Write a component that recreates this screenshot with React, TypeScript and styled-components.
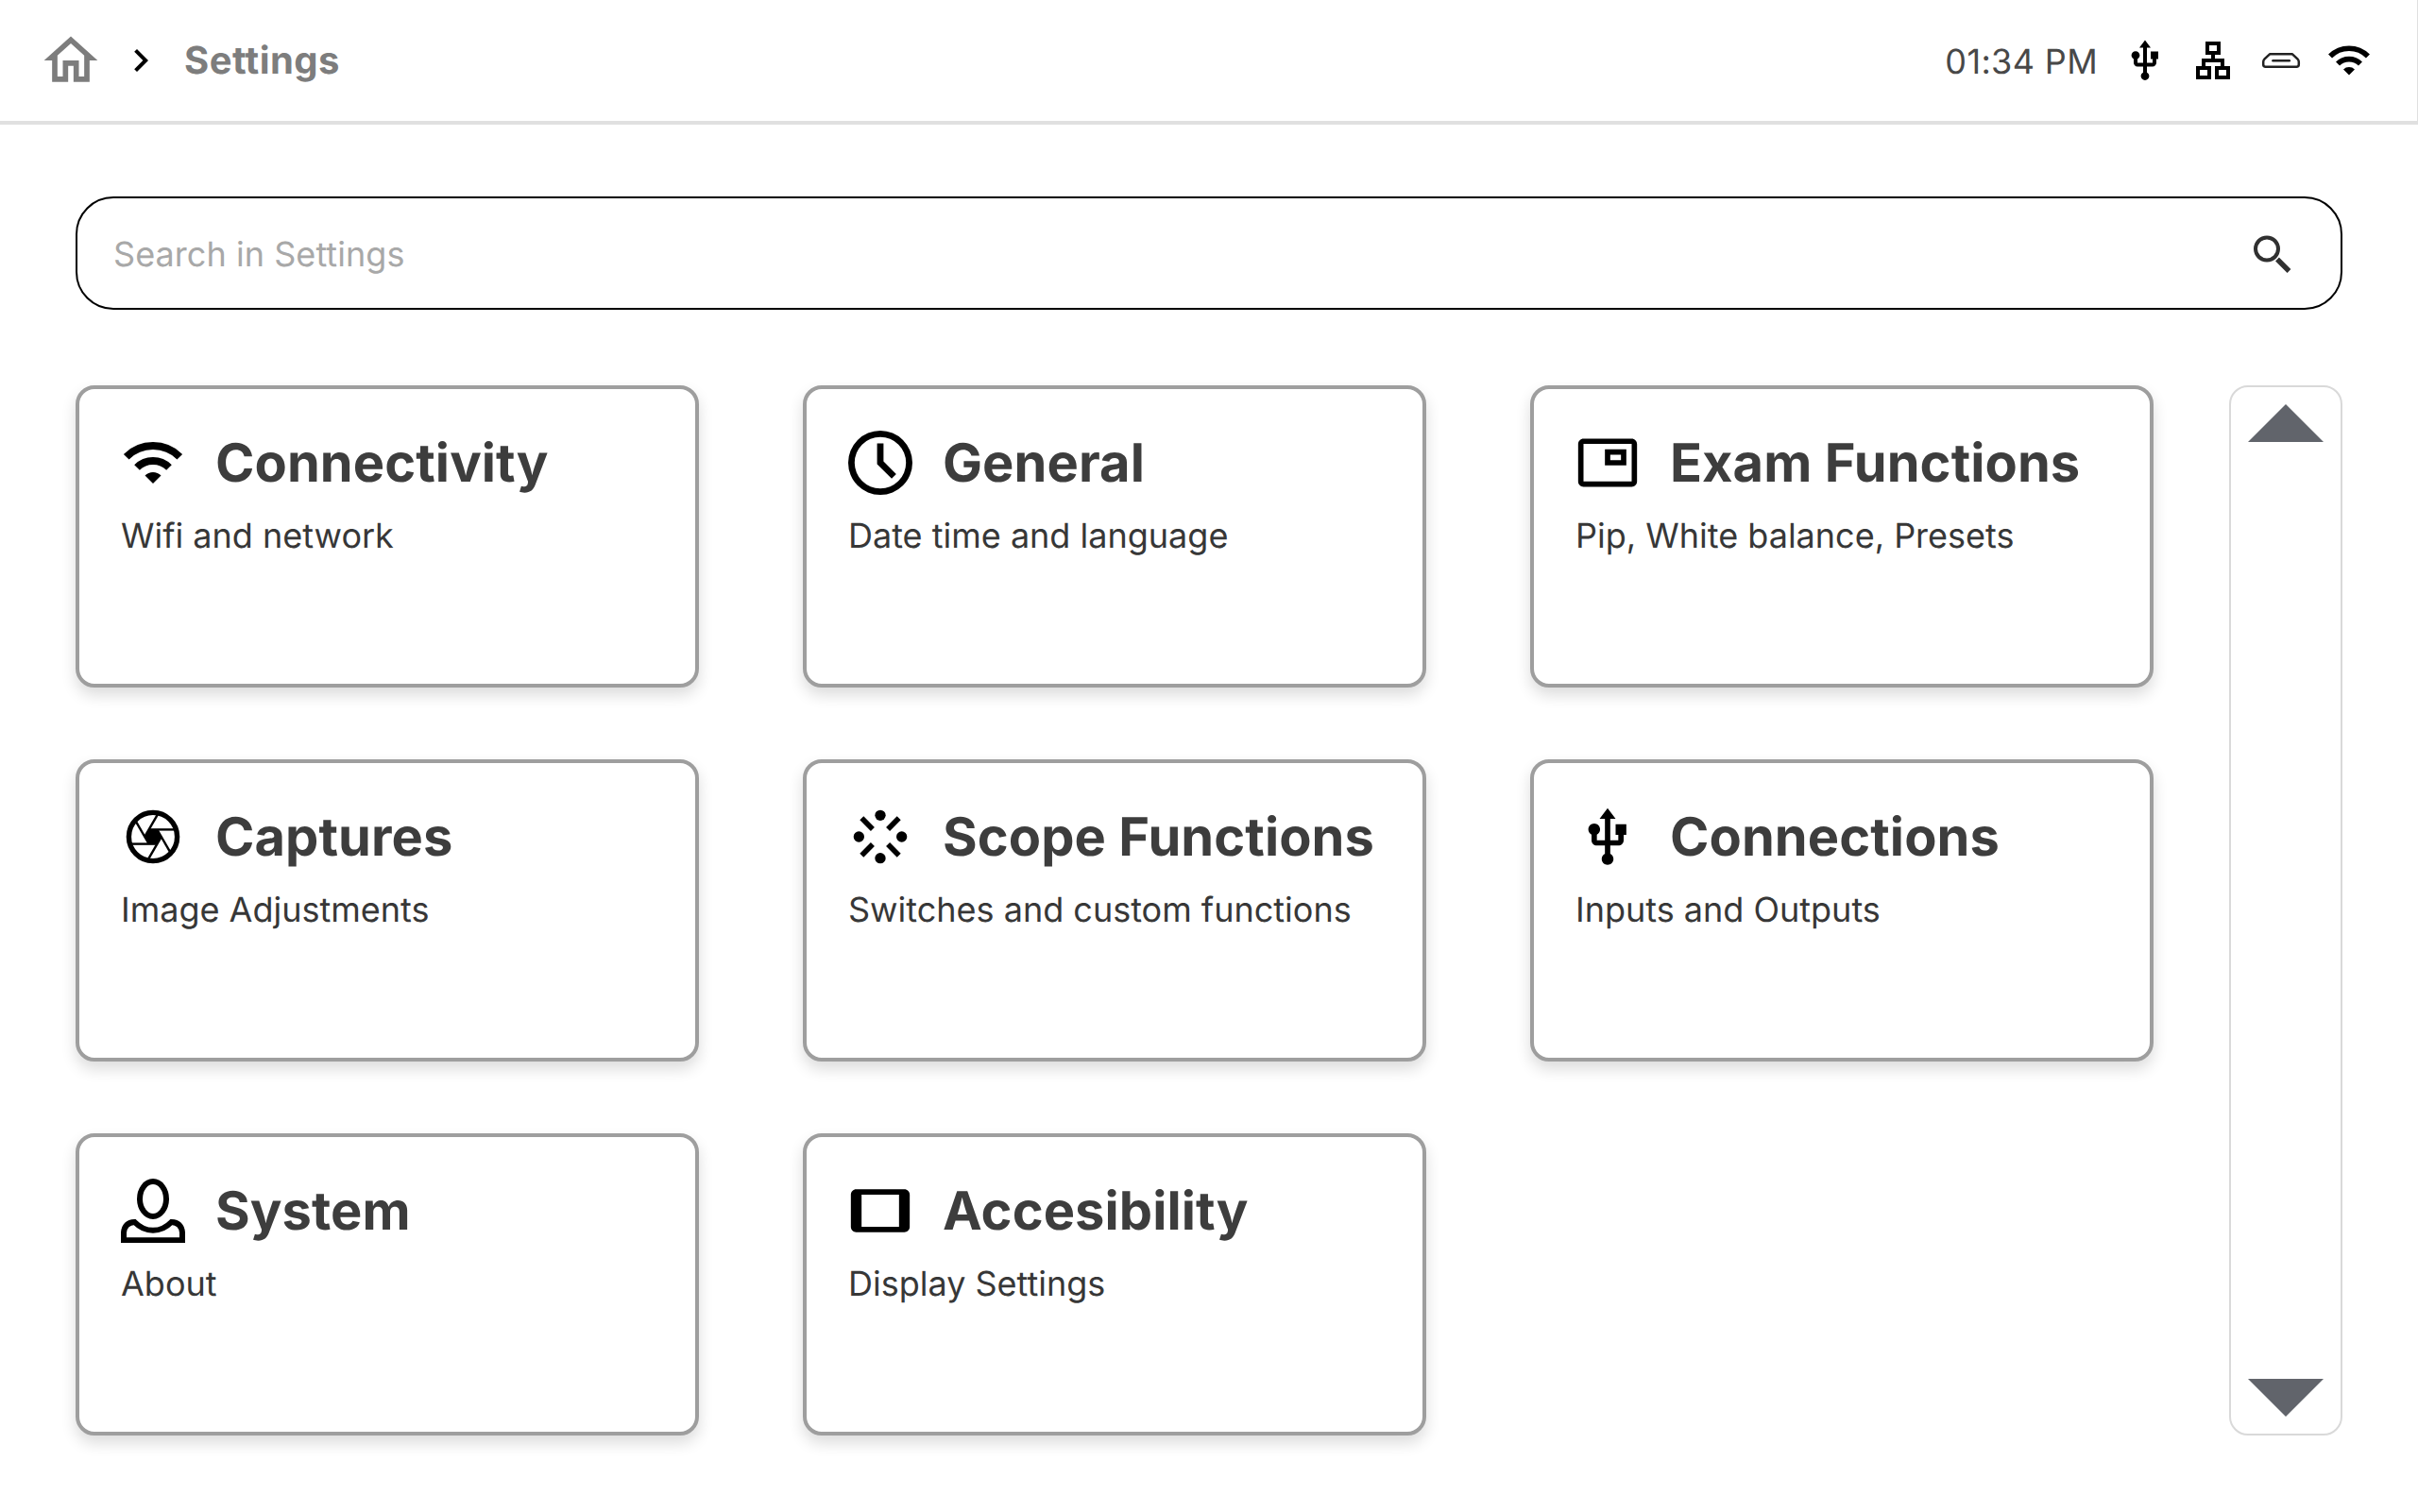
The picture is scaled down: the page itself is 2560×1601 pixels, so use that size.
import React from 'react';
import styled, { createGlobalStyle } from 'styled-components';

const GlobalStyle = createGlobalStyle`
  * { box-sizing: border-box; }
  body { margin: 0; background: #fff; }
`;

const Page = styled.div`
  width: 2560px;
  height: 1601px;
  overflow: hidden;
  display: flex;
  flex-direction: column;
  background: #fff;
  font-family: Inter, 'Liberation Sans', sans-serif;
  text-rendering: geometricPrecision;
`;

const Header = styled.header`
  height: 132px;
  flex: none;
  display: flex;
  align-items: center;
  justify-content: space-between;
  padding: 0 48px 0 41px;
  border-bottom: 4px solid #e0e0e0;
  border-right: 1px solid #e0e0e0;
`;

const Breadcrumb = styled.nav`
  display: flex;
  align-items: center;
`;

const HomeLink = styled.a`
  display: flex;
  margin-right: 16px;
  color: #7d7d7d;
`;

const Crumb = styled.span`
  margin-left: 22px;
  font-size: 40px;
  line-height: 48px;
  font-weight: 700;
  letter-spacing: 0.45px;
  color: #7d7d7d;
`;

const StatusBar = styled.div`
  display: flex;
  align-items: center;
  gap: 24px;
`;

const Clock = styled.span`
  padding: 2px 2px 0 0;
  font-size: 36px;
  line-height: 48px;
  letter-spacing: 0.35px;
  color: #484848;
`;

const Main = styled.main`
  flex: 1;
  display: flex;
  flex-direction: column;
  gap: 80px;
  padding: 76px 80px 80px;
`;

const SearchBox = styled.label`
  height: 120px;
  display: flex;
  align-items: center;
  justify-content: space-between;
  padding: 2px 50px 0 38px;
  border: 2px solid #000;
  border-radius: 40px;
`;

const SearchInput = styled.input`
  flex: 1;
  padding: 0;
  border: 0;
  outline: 0;
  background: transparent;
  font: 400 36px/48px Inter, 'Liberation Sans', sans-serif;
  letter-spacing: 0.05px;
  text-rendering: geometricPrecision;
  color: #333;
  &::placeholder { color: #a8a8a8; opacity: 1; }
`;

const Content = styled.div`
  display: flex;
  gap: 80px;
`;

const Grid = styled.section`
  display: grid;
  grid-template-columns: repeat(3, 660px);
  grid-auto-rows: 320px;
  gap: 76px 110px;
`;

const Card = styled.article`
  display: flex;
  flex-direction: column;
  gap: 20px;
  padding: 44px;
  border: 4px solid #9e9e9e;
  border-radius: 20px;
  background: #fff;
  box-shadow: 0 8px 16px rgba(0, 0, 0, 0.14);
`;

const CardHead = styled.div`
  height: 68px;
  display: flex;
  align-items: center;
  gap: 32px;
`;

const CardTitle = styled.h2`
  margin: 0;
  font-size: 56px;
  line-height: 68px;
  font-weight: 700;
  letter-spacing: 0.08px;
  color: #3d3d3d;
  white-space: nowrap;
`;

const CardText = styled.p`
  margin: 0;
  font-size: 36px;
  line-height: 46px;
  color: #373737;
  white-space: nowrap;
`;

const ScrollRail = styled.aside`
  width: 120px;
  height: 1112px;
  display: flex;
  flex-direction: column;
  align-items: center;
  justify-content: space-between;
  padding: 18px 0;
  border: 2px solid #d9d9d9;
  border-radius: 20px;
`;

const Svg = styled.svg<{ $size: number }>`
  flex: none;
  display: block;
  width: ${(p) => p.$size}px;
  height: ${(p) => p.$size}px;
  fill: currentColor;
`;

const Arrow = styled.svg`
  display: block;
  width: 80px;
  height: 40px;
  fill: #61646b;
`;

type IconProps = { size?: number };

const HomeIcon = ({ size = 68 }: IconProps) => (
  <Svg $size={size} viewBox="0 0 24 24">
    <path d="M12 5.69l5 4.5V18h-2v-6H9v6H7v-7.81l5-4.5M12 3L2 12h3v8h6v-6h2v6h6v-8h3L12 3z" />
  </Svg>
);

const ChevronIcon = ({ size = 48 }: IconProps) => (
  <Svg $size={size} viewBox="0 0 24 24">
    <path d="M10 6L8.59 7.41 13.17 12l-4.58 4.59L10 18l6-6z" />
  </Svg>
);

const WifiIcon = ({ size = 68 }: IconProps) => (
  <Svg $size={size} viewBox="0 0 68 68">
    <g transform="translate(34 56)">
      <path d="M-28.28 -28.28A40 40 0 0 1 28.28 -28.28" fill="none" stroke="currentColor" strokeWidth="8" />
      <path d="M-16.97 -16.97A24 24 0 0 1 16.97 -16.97" fill="none" stroke="currentColor" strokeWidth="8" />
      <path d="M0 0L-8.49 -8.49A12 12 0 0 1 8.49 -8.49Z" />
    </g>
  </Svg>
);

const UsbIcon = ({ size = 68 }: IconProps) => (
  <Svg $size={size} viewBox="0 -0.3 24 24">
    <path d="M15 7v4h1v2h-3V5h2l-3-4-3 4h2v8H8v-2.07c.7-.37 1.2-1.08 1.2-1.93 0-1.21-.99-2.2-2.2-2.2-1.21 0-2.2.99-2.2 2.2 0 .85.5 1.56 1.2 1.93V13c0 1.11.89 2 2 2h3v3.05c-.71.37-1.2 1.1-1.2 1.95 0 1.22.99 2.2 2.2 2.2 1.21 0 2.2-.98 2.2-2.2 0-.85-.49-1.58-1.2-1.95V15h3c1.11 0 2-.89 2-2v-2h1V7h-4z" />
  </Svg>
);

const LanIcon = ({ size = 48 }: IconProps) => (
  <Svg $size={size} viewBox="0 0 24 24">
    <path d="M13 22h8v-7h-3v-4h-5V9h3V2H8v7h3v2H6v4H3v7h8v-7H8v-2h8v2h-3v7zM10 7V4h4v3h-4zM9 17v3H5v-3h4zM19 17v3h-4v-3h4z" />
  </Svg>
);

const HdmiIcon = ({ size = 48 }: IconProps) => (
  <Svg $size={size} viewBox="0 0 48 48">
    <g fill="none" stroke="#222" strokeWidth="2.5" strokeLinecap="round" strokeLinejoin="round">
      <path d="M12 17.3H36L41.4 22.4Q42.8 23.8 42.8 25.6V28.2Q42.8 30.7 40.3 30.7H7.7Q5.2 30.7 5.2 28.2V25.6Q5.2 23.8 6.6 22.4Z" />
      <path d="M15.4 24.2H32.8" />
    </g>
  </Svg>
);

const SearchIcon = () => (
  <Svg $size={44} viewBox="0 0 44 44">
    <circle cx="16" cy="16.5" r="12" fill="none" stroke="#303030" strokeWidth="4" />
    <path d="M27 27.5L39.5 40" fill="none" stroke="#303030" strokeWidth="5.4" />
  </Svg>
);

const TimeIcon = () => (
  <Svg $size={68} viewBox="0 0 20 20">
    <path d="M10 20a10 10 0 1 1 0-20 10 10 0 0 1 0 20zm0-2a8 8 0 1 0 0-16 8 8 0 0 0 0 16zm-1-7.59V4h2v5.59l3.95 3.95-1.41 1.41L9 10.41z" />
  </Svg>
);

const PipIcon = () => (
  <Svg $size={68} viewBox="0 0 24 24">
    <path d="M19 7h-8v6h8V7zm-2 4h-4V9h4v2zm4-8H3c-1.1 0-2 .9-2 2v14c0 1.1.9 1.98 2 1.98h18c1.1 0 2-.88 2-1.98V5c0-1.1-.9-2-2-2zm0 16.01H3V4.98h18v14.03z" />
  </Svg>
);

const ApertureIcon = () => (
  <Svg $size={68} viewBox="0 0 68 68">
    <circle cx="34" cy="34" r="25.6" fill="none" stroke="currentColor" strokeWidth="5.4" />
    <circle cx="34" cy="34" r="8" />
    <g stroke="currentColor" strokeWidth="2.4">
      {[0, 60, 120, 180, 240, 300].map((angle) => (
        <path key={angle} d="M30 26.4H57" transform={`rotate(${angle} 34 34)`} />
      ))}
    </g>
  </Svg>
);

const ScopeIcon = () => (
  <Svg $size={68} viewBox="0 0 24 24">
    <circle cx="12" cy="4" r="2" />
    <circle cx="20" cy="12" r="2" />
    <circle cx="12" cy="20" r="2" />
    <circle cx="4" cy="12" r="2" />
    <path
      d="M5.05 5.05L9.15 9.15M18.95 5.05L14.85 9.15M18.95 18.95L14.85 14.85M5.05 18.95L9.15 14.85"
      fill="none"
      stroke="currentColor"
      strokeWidth="2"
    />
  </Svg>
);

const PersonIcon = () => (
  <Svg $size={68} viewBox="0 0 68 68">
    <g fill="none" stroke="currentColor" strokeWidth="6">
      <ellipse cx="34" cy="21.5" rx="14" ry="18.4" />
      <path d="M3 65.3V57Q4 46.5 14.5 46Q23 54.8 34 54.8Q45 54.8 53.5 46Q64 46.5 65 57V65.3Z" />
    </g>
  </Svg>
);

const TabletIcon = () => (
  <Svg $size={68} viewBox="0 0 24 24">
    <path d="M21 4H3c-1.1 0-2 .9-2 2v12c0 1.1.9 2 2 2h18c1.1 0 1.99-.9 1.99-2L23 6c0-1.1-.9-2-2-2zm-2 14H5V6h14v12z" />
  </Svg>
);

const cards = [
  { title: 'Connectivity', text: 'Wifi and network', icon: <WifiIcon /> },
  { title: 'General', text: 'Date time and language', icon: <TimeIcon /> },
  { title: 'Exam Functions', text: 'Pip, White balance, Presets', icon: <PipIcon /> },
  { title: 'Captures', text: 'Image Adjustments', icon: <ApertureIcon /> },
  { title: 'Scope Functions', text: 'Switches and custom functions', icon: <ScopeIcon /> },
  { title: 'Connections', text: 'Inputs and Outputs', icon: <UsbIcon /> },
  { title: 'System', text: 'About', icon: <PersonIcon /> },
  { title: 'Accesibility', text: 'Display Settings', icon: <TabletIcon /> },
];

export default function App() {
  return (
    <>
      <GlobalStyle />
      <Page>
        <Header>
          <Breadcrumb>
            <HomeLink>
              <HomeIcon />
            </HomeLink>
            <ChevronIcon />
            <Crumb>Settings</Crumb>
          </Breadcrumb>
          <StatusBar>
            <Clock>01:34 PM</Clock>
            <UsbIcon size={48} />
            <LanIcon />
            <HdmiIcon />
            <WifiIcon size={48} />
          </StatusBar>
        </Header>
        <Main>
          <SearchBox>
            <SearchInput placeholder="Search in Settings" />
            <SearchIcon />
          </SearchBox>
          <Content>
            <Grid>
              {cards.map((card) => (
                <Card key={card.title}>
                  <CardHead>
                    {card.icon}
                    <CardTitle>{card.title}</CardTitle>
                  </CardHead>
                  <CardText>{card.text}</CardText>
                </Card>
              ))}
            </Grid>
            <ScrollRail>
              <Arrow viewBox="0 0 80 40">
                <path d="M40 0L80 40H0Z" />
              </Arrow>
              <Arrow viewBox="0 0 80 40">
                <path d="M40 40L0 0H80Z" />
              </Arrow>
            </ScrollRail>
          </Content>
        </Main>
      </Page>
    </>
  );
}
